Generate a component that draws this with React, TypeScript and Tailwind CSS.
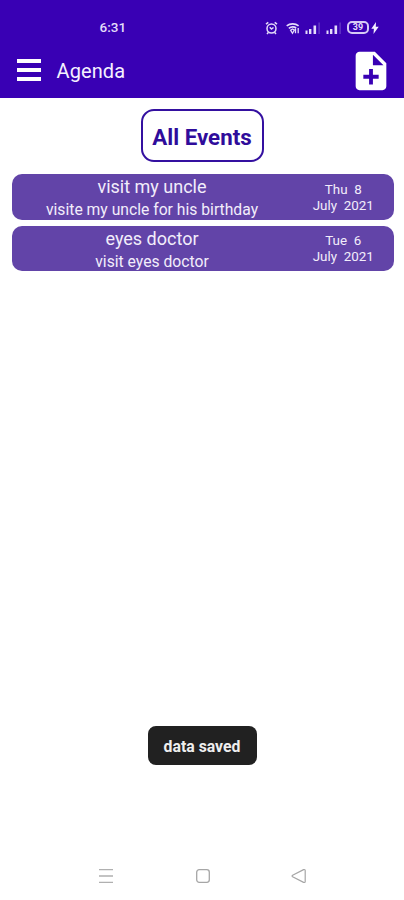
const events = [
    {
        title: 'visit my uncle',
        description: 'visite my uncle for his birthday',
        day: 'Thu  8',
        month: 'July  2021',
    },
    {
        title: 'eyes doctor',
        description: 'visit eyes doctor',
        day: 'Tue  6',
        month: 'July  2021',
    },
];

function SignalIcon() {
    return (
        <svg width="16" height="14" viewBox="0 0 16 14" fill="#e4dcfa">
            <rect x="0.5" y="9.5" width="2" height="3.5" />
            <rect x="4" y="8" width="2.4" height="5" />
            <rect x="8.5" y="4.5" width="2.6" height="8.5" />
            <rect x="13.5" y="1.5" width="1.2" height="11.5" opacity="0.3" />
        </svg>
    );
}

function StatusBar() {
    return (
        <div className="flex h-11 items-end justify-between pr-[25px] pb-2 pl-[99.5px]">
            <span className="text-[13.5px] leading-[17px] font-medium text-[#e4dcfa]">6:31</span>
            <div className="flex h-[17px] items-center">
                {/* Alarm */}
                <svg width="13" height="14" viewBox="0 0 13 14" fill="none" stroke="#e4dcfa" strokeWidth="1.5">
                    <circle cx="6.5" cy="7.5" r="4.5" />
                    <path d="M1 3.2 3.3 1.3M9.7 1.3 12 3.2M4.7 6.3 6.5 8l2-1.5M3.5 11.3 2 13M9.5 11.3l1.5 1.7" />
                </svg>
                {/* Wifi */}
                <svg className="ml-2" width="14" height="14" viewBox="0 0 14 14" fill="none" stroke="#e4dcfa" strokeWidth="1.6">
                    <path d="M0.7 4.8C4 2.2 9.3 2.2 12.6 4.8M2.8 7.4c2.3-1.8 5.3-1.8 7.4-.4" />
                    <path d="M4.6 9.2 6.5 8l1.8 1-1.8 3.3zM9.5 7.5v4.8M12.2 7v5.3" strokeWidth="1.3" />
                </svg>
                <div className="ml-[5px] flex gap-[5px]">
                    <SignalIcon />
                    <SignalIcon />
                </div>
                <div className="ml-[5px] flex h-[13px] w-[22px] items-center justify-center rounded-[5px] border-2 border-[#d6caf5] text-[9px] leading-none font-bold text-[#e4dcfa]">
                    39
                </div>
                <svg className="ml-[2px]" width="8" height="14" viewBox="0 0 8 14" fill="#f3efff">
                    <path d="M5 1 .3 7.8h2.6L2.5 13l5.2-7.2H4.8z" />
                </svg>
            </div>
        </div>
    );
}

function AppBar() {
    return (
        <div className="flex h-[54px] items-center pr-[10px] pl-[16.5px]">
            <button className="mb-[2px] flex w-6 flex-col gap-[5px]" aria-label="Menu">
                <span className="h-1 w-full bg-white" />
                <span className="h-1 w-full bg-white" />
                <span className="h-1 w-full bg-white" />
            </button>
            <h1 className="ml-4 flex-1 pb-[1px] text-[20px] leading-6 tracking-[0.1px] text-[#f5f1ff]">Agenda</h1>
            <button className="mb-[1px]" aria-label="Add event">
                <svg width="46" height="46" viewBox="0 0 24 24" fill="#fff">
                    <path d="M14 2H6c-1.1 0-2 .9-2 2v16c0 1.1.9 2 2 2h12c1.1 0 2-.9 2-2V8l-6-6zm2 14h-3v3h-2v-3H8v-2h3v-3h2v3h3v2zm-3-7V3.5L18.5 9H13z" />
                </svg>
            </button>
        </div>
    );
}

export default function App() {
    return (
        <div className="flex h-[900px] w-[404px] flex-col bg-white font-['Roboto',sans-serif]">
            <header className="h-[98px] bg-[#3900b4]">
                <StatusBar />
                <AppBar />
            </header>

            <main className="flex flex-1 flex-col items-center pt-[11px]">
                <button className="h-[53px] w-[123px] rounded-[13px] border-2 border-[#3410a0] pt-[3px] text-[22.3px] leading-none font-bold whitespace-nowrap text-[#2f0c9b]">
                    All Events
                </button>

                <ul className="mt-3 flex w-full flex-col gap-[6px] pr-[10px] pl-[11.5px]">
                    {events.map((event) => (
                        <li
                            key={event.title}
                            className="flex h-[45.5px] rounded-[10px] bg-[#6244a8] text-[#f2edfb]"
                        >
                            <div className="flex w-[281px] flex-col items-center whitespace-nowrap">
                                <span className="pt-[1px] text-[18px] leading-[23px]">{event.title}</span>
                                <span className="pt-[1px] text-[15.7px] leading-[21px]">{event.description}</span>
                            </div>
                            <div className="flex flex-1 flex-col items-center pt-[7.5px] text-[13.4px] leading-[16px] whitespace-pre">
                                <span>{event.day}</span>
                                <span>{event.month}</span>
                            </div>
                        </li>
                    ))}
                </ul>

                {/* Toast */}
                <div className="mt-auto mb-[87px] flex h-[39px] w-[109px] items-center justify-center rounded-[8px] bg-[#212121] pt-[3px] text-[15.8px] font-bold text-[#eeeeee]">
                    data saved
                </div>
            </main>

            <nav className="flex h-12 items-center justify-between pr-[97px] pl-[98px]">
                <svg width="16" height="16" viewBox="0 0 16 16" fill="none" stroke="#b0b0b0" strokeWidth="1.3">
                    <path d="M1 1.7h14M1 8h14M1 14.3h14" />
                </svg>
                <svg width="16" height="16" viewBox="0 0 16 16" fill="none" stroke="#a6a6a6" strokeWidth="1.3">
                    <rect x="1.7" y="1.7" width="12.6" height="12.6" rx="2.5" />
                </svg>
                <svg width="16" height="16" viewBox="0 0 16 16" fill="none" stroke="#a6a6a6" strokeWidth="1.2" strokeLinejoin="round">
                    <path d="M1.6 7.2 12.6 1.6q1.6-.4 1.6 1v10.8q0 1.4-1.6 1L1.6 8.7q-1-.7 0-1.5z" />
                </svg>
            </nav>
        </div>
    );
}
